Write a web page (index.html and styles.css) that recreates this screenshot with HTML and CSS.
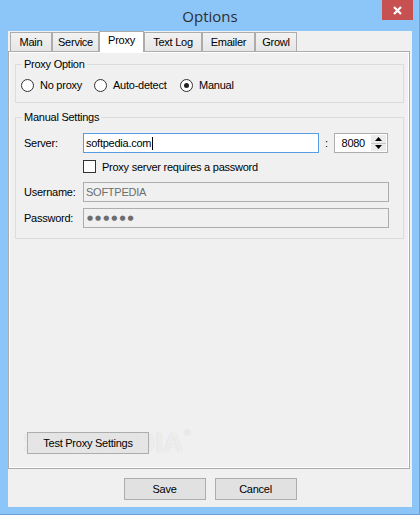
FILE: index.html
```html
<!DOCTYPE html>
<html>
<head>
<meta charset="utf-8">
<title>Options</title>
<link rel="stylesheet" href="styles.css">
</head>
<body>
<div class="window">
  <div class="titlebar">
    <span class="title">Options</span>
    <button class="close" aria-label="Close"><svg width="9" height="9" viewBox="0 0 9 9"><path d="M1 1L8 8M8 1L1 8" stroke="#fff" stroke-width="2.2"/></svg></button>
  </div>
  <div class="client">
    <div class="tabs">
      <div class="tab t-main">Main</div>
      <div class="tab t-service">Service</div>
      <div class="tab t-proxy active">Proxy</div>
      <div class="tab t-log">Text Log</div>
      <div class="tab t-mail">Emailer</div>
      <div class="tab t-growl">Growl</div>
    </div>
    <div class="page">
      <fieldset class="group g-proxy">
        <legend>Proxy Option</legend>
        <div class="radios">
          <label class="radio"><span class="rbox"></span>No proxy</label>
          <label class="radio"><span class="rbox"></span>Auto-detect</label>
          <label class="radio"><span class="rbox checked"></span>Manual</label>
        </div>
      </fieldset>
      <fieldset class="group g-manual">
        <legend>Manual Settings</legend>
        <div class="form">
          <div class="row">
            <span class="lbl">Server:</span>
            <div class="field focused server">softpedia.com<span class="caret"></span></div>
            <span class="colon">:</span>
            <div class="spin">
              <span class="spin-val">8080</span>
              <span class="spin-btns">
                <span class="sbtn"><svg width="7" height="4" viewBox="0 0 7 4"><path d="M3.5 0L7 4H0Z" fill="#000"/></svg></span>
                <span class="sbtn"><svg width="7" height="4" viewBox="0 0 7 4"><path d="M0 0H7L3.5 4Z" fill="#000"/></svg></span>
              </span>
            </div>
          </div>
          <div class="row check-row">
            <span class="cbox"></span>
            <span>Proxy server requires a password</span>
          </div>
          <div class="row user-row">
            <span class="lbl">Username:</span>
            <div class="field disabled wide">SOFTPEDIA</div>
          </div>
          <div class="row pass-row">
            <span class="lbl">Password:</span>
            <div class="field disabled wide"><span class="dots">●●●●●●</span></div>
          </div>
        </div>
      </fieldset>
      <div class="watermark">SOFTPEDIA<sup>®</sup></div>
      <button class="btn test">Test Proxy Settings</button>
    </div>
    <div class="actions">
      <button class="btn act">Save</button>
      <button class="btn act">Cancel</button>
    </div>
  </div>
</div>
</body>
</html>
```
FILE: styles.css
```css
* { box-sizing: border-box; }
html, body { margin: 0; padding: 0; }
body {
  width: 420px;
  height: 515px;
  overflow: hidden;
  font-family: "Liberation Sans", Arial, sans-serif;
  font-size: 11px;
  letter-spacing: -0.25px;
  color: #000;
}
.window {
  width: 420px;
  height: 515px;
  background: #8cc5f7;
  box-shadow: inset -1px -1px 0 #6e9fd1;
  display: flex;
  flex-direction: column;
}
.titlebar {
  height: 31px;
  display: flex;
  align-items: center;
  justify-content: center;
  position: relative;
}
.title {
  font-family: "Open Sans", "Noto Sans", sans-serif;
  font-size: 15px;
  letter-spacing: 0;
  color: #2e2e2e;
  margin-top: 1px;
}
.close {
  position: absolute;
  top: 0;
  right: 7px;
  width: 31px;
  height: 20px;
  background: #c75050;
  border: 0;
  padding: 0;
  display: flex;
  align-items: center;
  justify-content: center;
}
.client {
  flex: 1;
  margin: 0 8px 8px;
  background: #f0f0f0;
  display: flex;
  flex-direction: column;
}
.tabs {
  display: flex;
  align-items: flex-end;
  height: 21px;
  padding-left: 2px;
  margin-bottom: -1px;
  position: relative;
  z-index: 1;
}
.tab {
  height: 19px;
  margin-bottom: 1px;
  border: 1px solid #acacac;
  border-bottom: 0;
  background: linear-gradient(#f2f2f2, #e6e6e6);
  display: flex;
  justify-content: center;
  padding-top: 3px;
  line-height: 13px;
}
.tab.active {
  height: 21px;
  margin-bottom: 0;
  background: #fff;
  padding-top: 2px;
}
.t-main { width: 42px; }
.t-service { width: 47px; }
.t-proxy { width: 45px; }
.t-log { width: 58px; }
.t-mail { width: 53px; }
.t-growl { width: 42px; }
.page {
  flex: 1;
  margin-right: 2px;
  border: 1px solid #acacac;
  box-shadow: inset 0 0 0 1px #fff;
  background: #f0f0f0;
  display: flex;
  flex-direction: column;
  padding: 6px 5px 0 6px;
  position: relative;
}
.group {
  margin: 0;
  min-width: 0;
  border: 1px solid #dcdcdc;
  padding: 0 13px 9px 5px;
}
.group legend {
  padding: 0 2px;
  margin-left: 1px;
  line-height: 13px;
}
.g-proxy { padding-bottom: 10px; }
.radios {
  display: grid;
  grid-template-columns: 73px 86px auto;
  margin-top: 8px;
  height: 13px;
  align-items: center;
}
.radio {
  display: flex;
  align-items: center;
  line-height: 13px;
}
.rbox {
  width: 13px;
  height: 13px;
  border: 1px solid #333;
  border-radius: 50%;
  background: #fff;
  margin-right: 6px;
  display: flex;
  align-items: center;
  justify-content: center;
}
.rbox.checked::after {
  content: "";
  width: 5px;
  height: 5px;
  border-radius: 50%;
  background: #222;
}
.g-manual {
  margin-top: 8px;
  padding-bottom: 10px;
}
.form {
  margin-top: 9px;
  display: flex;
  flex-direction: column;
}
.row {
  display: flex;
  align-items: center;
  height: 20px;
}
.lbl {
  width: 62px;
  padding-left: 3px;
  flex: none;
}
.field {
  height: 20px;
  border: 1px solid #adadad;
  background: #fff;
  padding-left: 2px;
  display: flex;
  align-items: center;
}
.field.focused { border-color: #569de5; }
.server { width: 236px; }
.wide { width: 306px; }
.caret {
  display: inline-block;
  width: 1px;
  height: 13px;
  background: #000;
  margin-left: 1px;
}
.field.disabled {
  background: #f0f0f0;
  color: #6d6d6d;
}
.dots {
  font-family: "DejaVu Sans", sans-serif;
  font-size: 7px;
  letter-spacing: 2px;
  color: #6d6d6d;
  padding-left: 1px;
}
.colon {
  width: 15px;
  text-align: center;
}
.spin {
  width: 54px;
  height: 20px;
  border: 1px solid #adadad;
  background: #fff;
  display: flex;
}
.spin-val {
  flex: 1;
  text-align: right;
  padding-right: 6px;
  line-height: 18px;
}
.spin-btns {
  width: 15px;
  margin: 1px 1px 1px 0;
  display: flex;
  flex-direction: column;
  gap: 1px;
  background: #c8c8c8;
}
.sbtn {
  flex: 1;
  background: #ececec;
  display: flex;
  align-items: center;
  justify-content: center;
}
.check-row {
  height: 13px;
  margin-top: 7px;
}
.cbox {
  width: 13px;
  height: 13px;
  border: 1px solid #333;
  background: #fff;
  margin-left: 62px;
  margin-right: 6px;
}
.user-row { margin-top: 9px; }
.pass-row { margin-top: 6px; }
.btn {
  font: inherit;
  letter-spacing: inherit;
  color: #000;
  background: #e1e1e1;
  border: 1px solid #adadad;
  height: 22px;
  padding: 0;
}
.test {
  width: 122px;
  align-self: flex-start;
  margin: auto 0 14px 12px;
  position: relative;
  z-index: 1;
  background: rgba(225, 225, 225, 0.75);
}
.watermark {
  position: absolute;
  left: 14px;
  bottom: 11px;
  font-family: "Liberation Sans", Arial, sans-serif;
  font-weight: bold;
  font-size: 28px;
  line-height: 28px;
  letter-spacing: 0;
  color: rgba(255, 255, 255, 0.7);
  text-shadow: 0 0 1px rgba(0, 0, 0, 0.18);
  pointer-events: none;
}
.watermark sup {
  font-size: 9px;
  vertical-align: top;
  line-height: 9px;
  margin-left: 1px;
}
.actions {
  display: flex;
  justify-content: center;
  gap: 9px;
  margin: 9px 0 7px;
}
.act { width: 82px; }
```
